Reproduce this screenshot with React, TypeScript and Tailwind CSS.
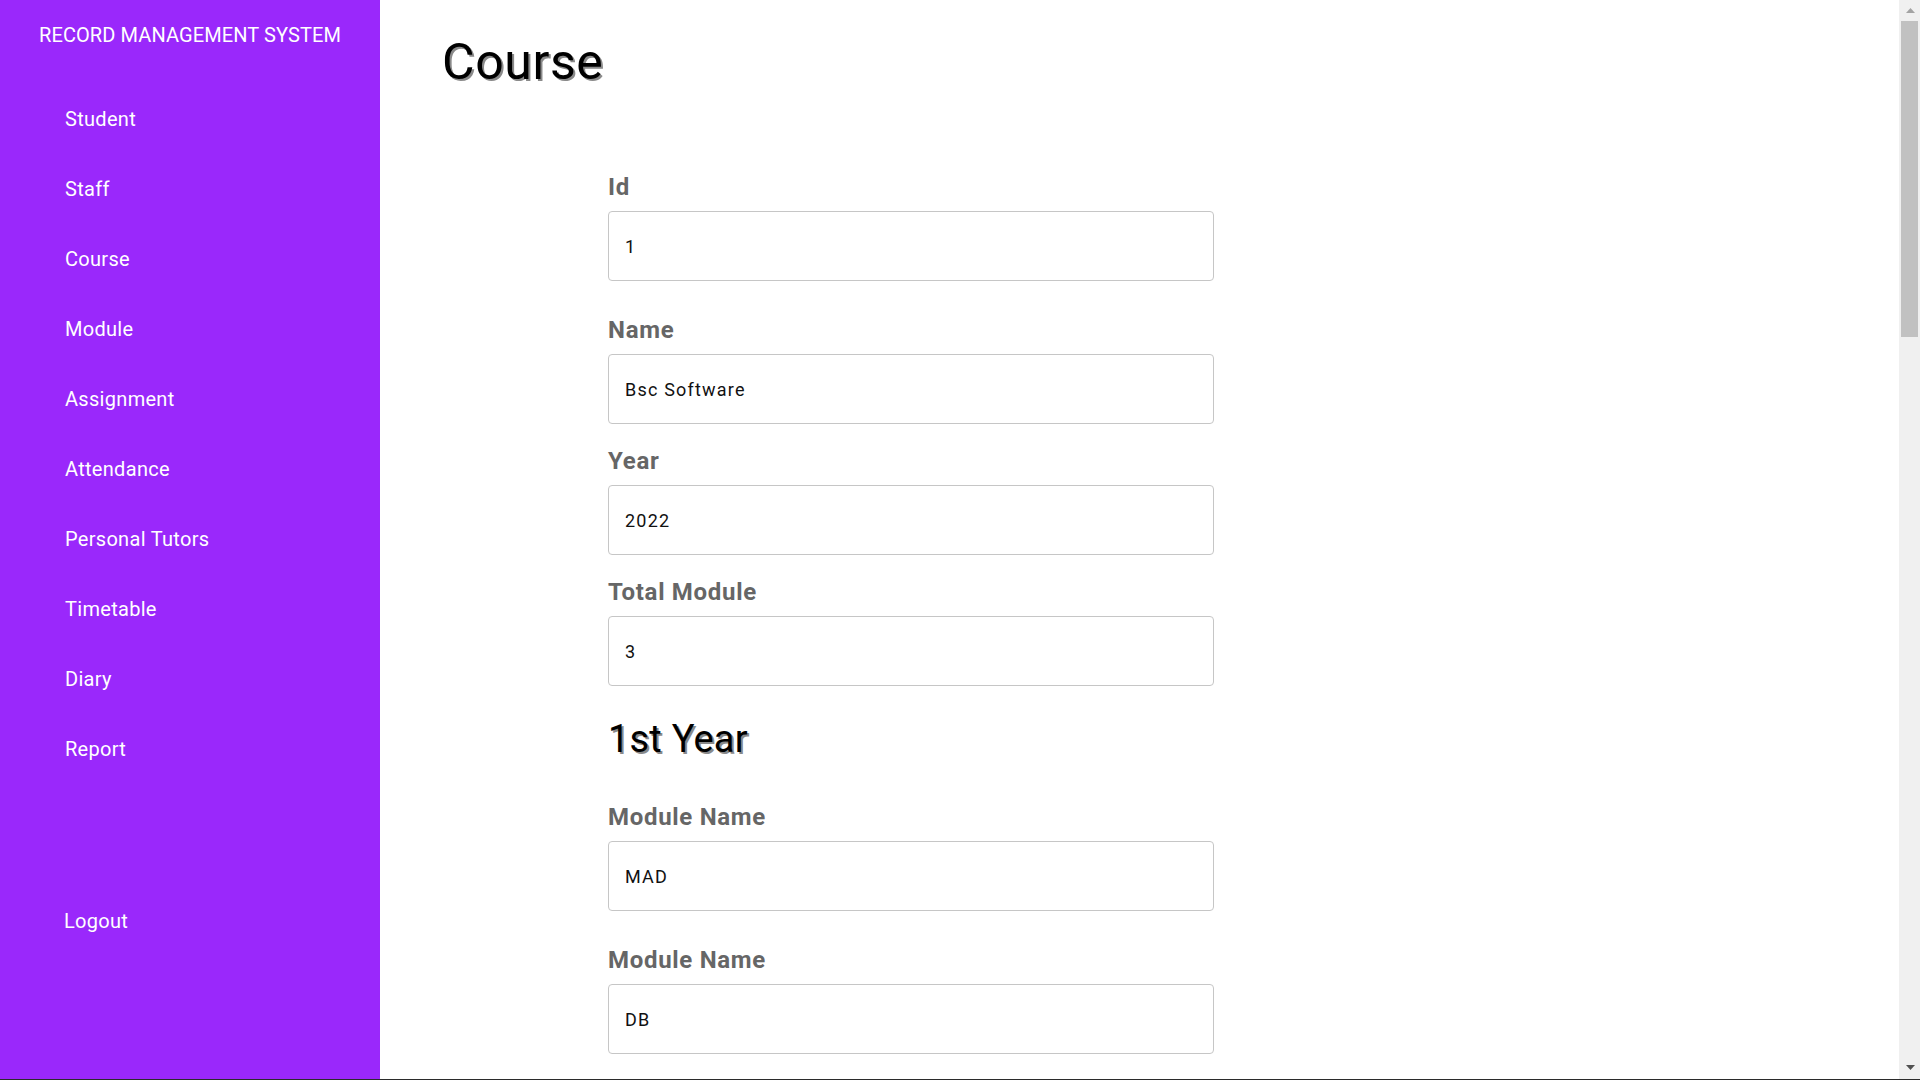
import React from "react";

const navItems = [
  "Student",
  "Staff",
  "Course",
  "Module",
  "Assignment",
  "Attendance",
  "Personal Tutors",
  "Timetable",
  "Diary",
  "Report",
];

function Field({
  label,
  value,
  className,
}: {
  label: string;
  value: string;
  className?: string;
}) {
  return (
    <div className={className}>
      <label className="mb-[10px] block text-[24px] font-bold leading-[28px] tracking-[0.7px] text-[#666666]">
        {label}
      </label>
      <input
        readOnly
        defaultValue={value}
        className="block h-[70px] w-full rounded-[4px] border border-[#c6c6c6] bg-white px-4 text-[18px] tracking-[1.2px] text-[#111111] outline-none"
      />
    </div>
  );
}

function YearHeading({ children, className }: { children: React.ReactNode; className?: string }) {
  return (
    <h2
      className={`text-[38px] font-normal leading-[44px] tracking-[0.2px] text-black [text-shadow:2px_2px_0_#8a8a8a] ${className ?? ""}`}
    >
      {children}
    </h2>
  );
}

function FakeScrollbar() {
  return (
    <div aria-hidden className="pointer-events-none fixed right-0 top-0 flex h-screen w-[21px] flex-col bg-[#f0f0f0]">
      <div className="flex h-[21px] items-center justify-center pl-[1px]">
        <svg width="9" height="5" viewBox="0 0 9 5">
          <path d="M4.5 0 L9 5 L0 5 Z" fill="#a3a3a3" />
        </svg>
      </div>
      <div className="mx-[2px] h-[316px] bg-[#c1c1c1]" />
      <div className="flex-1" />
      <div className="flex h-[21px] items-start justify-center pl-[1px] pt-[6px]">
        <svg width="9" height="5" viewBox="0 0 9 5">
          <path d="M0 0 L9 0 L4.5 5 Z" fill="#505050" />
        </svg>
      </div>
    </div>
  );
}

export default function App() {
  return (
    <div className="flex min-h-screen bg-white font-['Roboto','Liberation_Sans',sans-serif]">
      <aside className="sticky top-0 h-screen w-[380px] shrink-0 bg-[#9a28fb] text-white">
        <h2 className="pt-[23px] text-center text-[20px] font-normal leading-[24px] tracking-[0.1px]">
          RECORD MANAGEMENT SYSTEM
        </h2>
        <ul className="mt-[60px]">
          {navItems.map((item) => (
            <li key={item} className="h-[70px] pl-[65px] text-[20px] leading-[24px] tracking-[0.3px]">
              {item}
            </li>
          ))}
        </ul>
        <div className="mt-[102px] pl-[64px] text-[20px] leading-[24px] tracking-[0.3px]">Logout</div>
      </aside>

      <main className="min-h-[3575px] flex-1 pl-[62px] pt-[33px]">
        <h1 className="text-[50px] font-normal leading-[59px] tracking-[0.6px] text-black [text-shadow:2px_2px_0_#8a8a8a]">
          Course
        </h1>
        <form className="ml-[166px] mt-[81px] w-[606px]">
          <Field label="Id" value="1" />
          <Field label="Name" value="Bsc Software" className="mt-[35px]" />
          <Field label="Year" value="2022" className="mt-[23px]" />
          <Field label="Total Module" value="3" className="mt-[23px]" />

          <YearHeading className="mt-[31px]">1st Year</YearHeading>
          <Field label="Module Name" value="MAD" className="mt-[42px]" />
          <Field label="Module Name" value="DB" className="mt-[35px]" />
          <Field label="Module Name" value="OOP" className="mt-[35px]" />

          <YearHeading className="mt-[31px]">2nd Year</YearHeading>
          <Field label="Module Name" value="" className="mt-[42px]" />
          <Field label="Module Name" value="" className="mt-[35px]" />
          <Field label="Module Name" value="" className="mt-[35px]" />

          <YearHeading className="mt-[31px]">3rd Year</YearHeading>
          <Field label="Module Name" value="" className="mt-[42px]" />
          <Field label="Module Name" value="" className="mt-[35px]" />
          <Field label="Module Name" value="" className="mt-[35px]" />

          <button
            type="button"
            className="mt-[40px] h-[56px] w-full rounded-[4px] bg-[#9a28fb] text-[20px] text-white"
          >
            Submit
          </button>
        </form>
      </main>

      <FakeScrollbar />
      <div aria-hidden className="pointer-events-none fixed bottom-0 left-0 right-0 h-px bg-[#2b2b2b]" />
    </div>
  );
}
